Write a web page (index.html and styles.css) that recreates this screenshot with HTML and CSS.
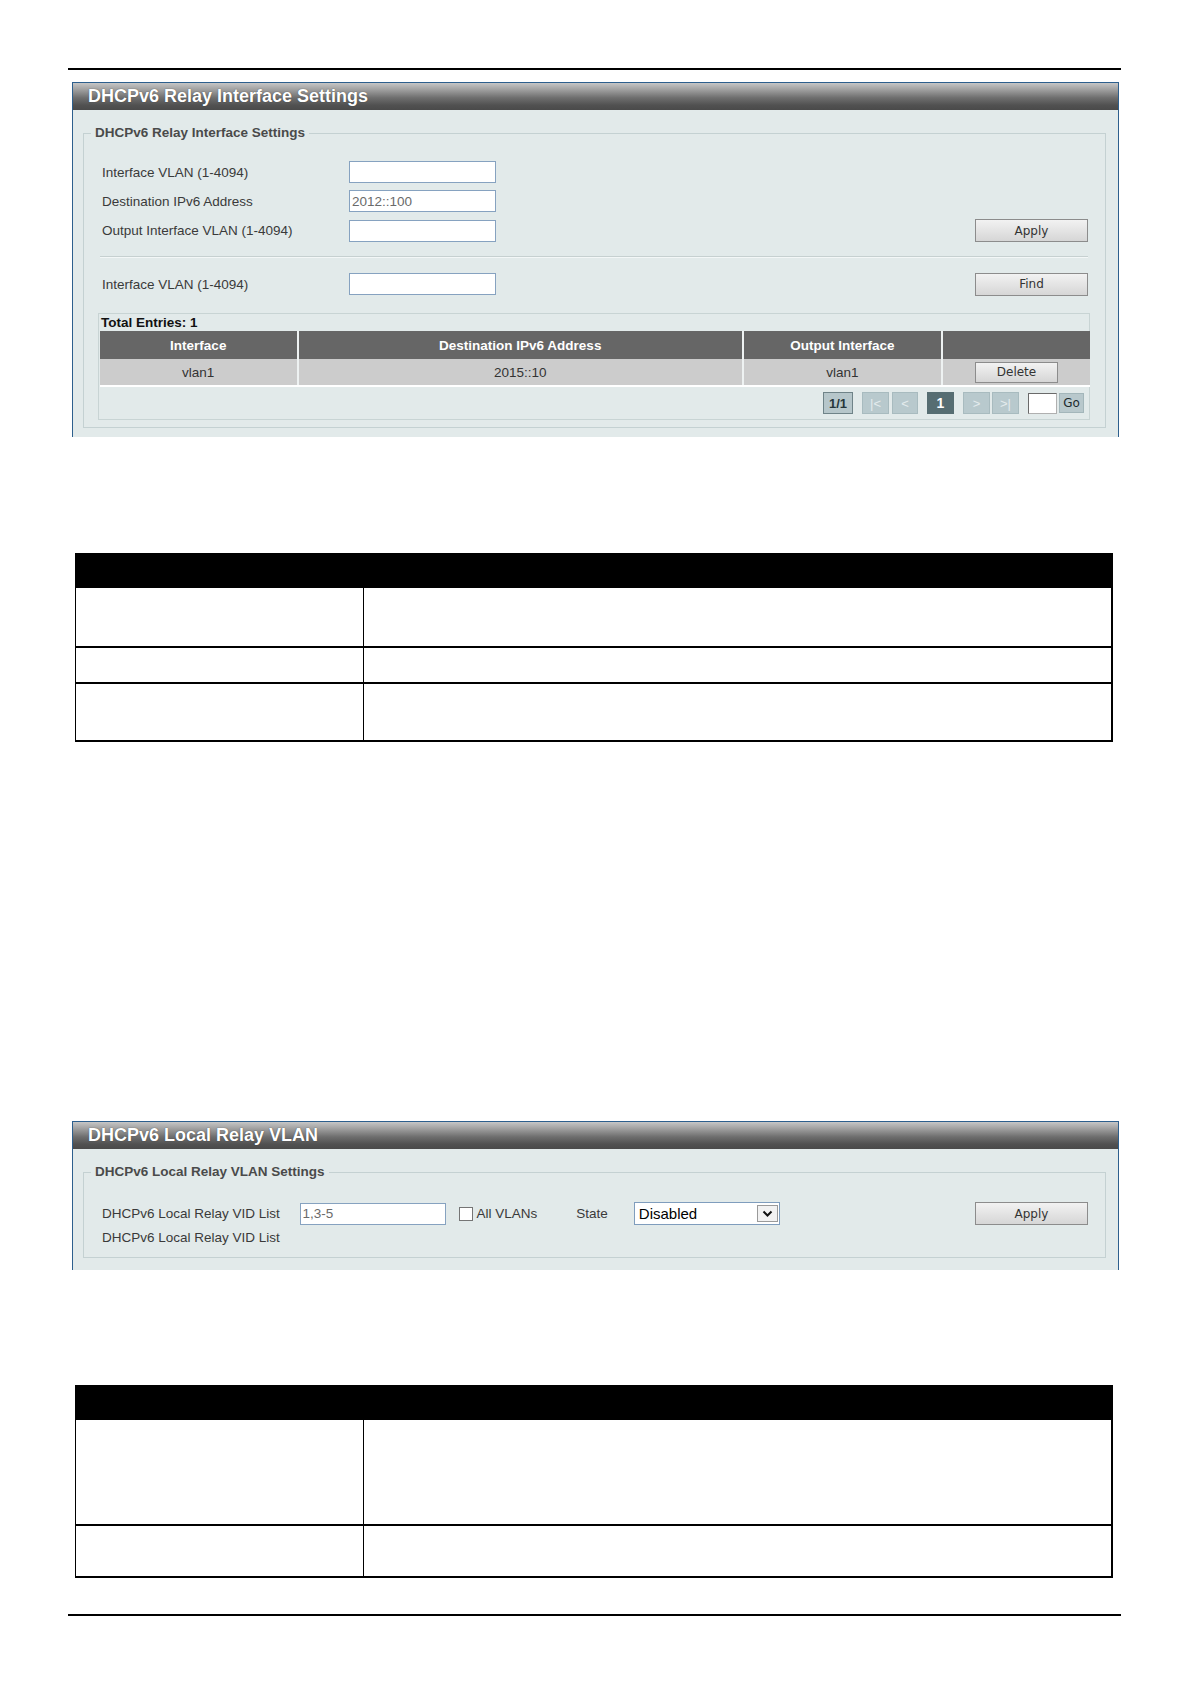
FILE: index.html
```html
<!DOCTYPE html>
<html lang="en">
<head>
<meta charset="utf-8">
<title>DHCPv6 Relay</title>
<link rel="stylesheet" href="styles.css">
</head>
<body>
<div class="sheet">
  <hr class="rule">

  <section class="panel">
    <h2 class="panel-title">DHCPv6 Relay Interface Settings</h2>
    <div class="panel-body">
      <fieldset class="group group-relay">
        <legend>DHCPv6 Relay Interface Settings</legend>
        <div class="form-row">
          <label class="field-label">Interface VLAN (1-4094)</label>
          <input class="text-input" type="text">
        </div>
        <div class="form-row">
          <label class="field-label">Destination IPv6 Address</label>
          <input class="text-input" type="text" value="2012::100">
        </div>
        <div class="form-row form-row-last">
          <label class="field-label">Output Interface VLAN (1-4094)</label>
          <input class="text-input" type="text">
          <button class="btn btn-wide push-right" type="button">Apply</button>
        </div>
        <div class="divider"></div>
        <div class="form-row form-row-find">
          <label class="field-label">Interface VLAN (1-4094)</label>
          <input class="text-input" type="text">
          <button class="btn btn-wide push-right" type="button">Find</button>
        </div>

        <div class="entries">
          <div class="entries-total">Total Entries: 1</div>
          <table class="grid">
            <colgroup>
              <col class="col-if"><col class="col-dst"><col class="col-out"><col class="col-act">
            </colgroup>
            <thead>
              <tr><th>Interface</th><th>Destination IPv6 Address</th><th>Output Interface</th><th></th></tr>
            </thead>
            <tbody>
              <tr>
                <td>vlan1</td><td>2015::10</td><td>vlan1</td>
                <td><button class="btn btn-delete" type="button">Delete</button></td>
              </tr>
            </tbody>
          </table>
          <div class="pager">
            <span class="pg-count">1/1</span>
            <span class="pg-btn pg-first">|&lt;</span>
            <span class="pg-btn pg-prev">&lt;</span>
            <span class="pg-btn pg-current">1</span>
            <span class="pg-btn pg-next">&gt;</span>
            <span class="pg-btn pg-last">&gt;|</span>
            <input class="pg-input" type="text">
            <span class="pg-go">Go</span>
          </div>
        </div>
      </fieldset>
    </div>
  </section>

  <table class="desc desc-relay">
    <thead><tr><th class="desc-param"></th><th></th></tr></thead>
    <tbody>
      <tr class="h59"><td class="desc-param"></td><td></td></tr>
      <tr class="h36"><td class="desc-param"></td><td></td></tr>
      <tr class="h58"><td class="desc-param"></td><td></td></tr>
    </tbody>
  </table>

  <section class="panel panel-local">
    <h2 class="panel-title">DHCPv6 Local Relay VLAN</h2>
    <div class="panel-body panel-body-local">
      <fieldset class="group group-local">
        <legend>DHCPv6 Local Relay VLAN Settings</legend>
        <div class="form-row form-row-local">
          <label class="field-label label-vid">DHCPv6 Local Relay VID List</label>
          <input class="text-input input-vid" type="text" value="1,3-5">
          <input class="check" type="checkbox" id="all-vlans">
          <label class="check-label" for="all-vlans">All VLANs</label>
          <span class="state-label">State</span>
          <span class="select-wrap">
            <select class="select">
              <option>Disabled</option>
              <option>Enabled</option>
            </select>
            <span class="select-arrow">
              <svg width="11" height="8" viewBox="0 0 11 8"><path d="M1.5 1.5 L5.5 5.5 L9.5 1.5" fill="none" stroke="#111" stroke-width="2"/></svg>
            </span>
          </span>
          <button class="btn btn-wide push-right" type="button">Apply</button>
        </div>
        <div class="field-note">DHCPv6 Local Relay VID List</div>
      </fieldset>
    </div>
  </section>

  <table class="desc desc-local">
    <thead><tr><th class="desc-param"></th><th></th></tr></thead>
    <tbody>
      <tr class="h105"><td class="desc-param"></td><td></td></tr>
      <tr class="h52"><td class="desc-param"></td><td></td></tr>
    </tbody>
  </table>

  <hr class="rule rule-bottom">
</div>
</body>
</html>
```

FILE: styles.css
```css
* {
  box-sizing: border-box;
}

body {
  margin: 0;
  background: #ffffff;
  font-family: "Liberation Sans", Arial, sans-serif;
  color: #333333;
}

.sheet {
  width: 1192px;
  padding: 68px 0 60px 68px;
}

/* page rules */
.rule {
  width: 1053px;
  height: 2px;
  margin: 0;
  border: 0;
  background: #000000;
}

.rule-bottom {
  margin-top: 36px;
}

/* settings panel */
.panel {
  width: 1047px;
  margin: 12px 0 0 4px;
  border: 1px solid #2d5f8d;
  border-bottom: 0;
  background: #e2eaea;
}

.panel-local {
  margin-top: 379px;
}

.panel-title {
  margin: 0;
  height: 27px;
  padding-left: 15px;
  line-height: 27px;
  font-size: 18px;
  font-weight: bold;
  color: #ffffff;
  text-shadow: 0 0 1px #333333;
  background: linear-gradient(to bottom, #c6c6c6 0%, #a4a4a4 22%, #6e6e6e 55%, #515151 82%, #4a4a4a 100%);
}

.panel-body {
  padding: 15px 12px 9px 10px;
}

.panel-body-local {
  padding-bottom: 12px;
}

.group {
  margin: 0;
  min-width: 0;
  border: 1px solid #c4d1d2;
  padding: 20px 15px 7px 14px;
}

.group-local {
  padding-top: 22px;
  padding-bottom: 11px;
}

.group legend {
  margin-left: -7px;
  padding: 0 4px;
  line-height: 16px;
  font-size: 13.5px;
  font-weight: bold;
  color: #4a4a4a;
}

/* form rows */
.form-row {
  display: flex;
  align-items: center;
  height: 22px;
  margin-bottom: 7px;
  padding: 0 2px 0 4px;
}

.form-row-last {
  height: 23px;
  margin-bottom: 0;
}

.form-row-find {
  margin-top: 15px;
  margin-bottom: 0;
}

.form-row-local {
  height: 23px;
  margin-bottom: 0;
}

.field-label {
  flex: 0 0 247px;
  font-size: 13.5px;
  color: #3a3a3a;
}

.label-vid {
  flex-basis: 197.5px;
}

.text-input {
  width: 147px;
  height: 22px;
  margin: 0;
  padding: 0 2px;
  border: 1px solid #86a2c0;
  background: #ffffff;
  font-family: "Liberation Sans", Arial, sans-serif;
  font-size: 13.5px;
  color: #6a6a6a;
  outline: none;
}

.input-vid {
  width: 146px;
}

.btn {
  margin: 0;
  padding: 0;
  border: 1px solid #8c8c8c;
  background: linear-gradient(to bottom, #f2f2f2 0%, #e4e4e4 50%, #d6d6d6 100%);
  font-family: "DejaVu Sans", sans-serif;
  font-size: 12px;
  color: #333333;
}

.form-row .push-right {
  margin-left: auto;
}

.btn-wide {
  width: 113px;
  height: 23px;
}

.btn-delete {
  width: 83px;
  height: 21px;
  vertical-align: middle;
}

.divider {
  margin: 14px 2px 0;
  height: 2px;
  border-top: 1px solid #c6d0d0;
  border-bottom: 1px solid #f3f7f7;
}

/* entries table */
.entries {
  margin-top: 18px;
  border: 1px solid #c8d4d4;
  padding-left: 1px;
}

.entries-total {
  height: 17px;
  line-height: 17px;
  padding-left: 1px;
  font-size: 13.5px;
  font-weight: bold;
  color: #111111;
}

.grid {
  width: 100%;
  border-collapse: collapse;
  table-layout: fixed;
  font-size: 13.5px;
}

.col-if { width: 197.5px; }
.col-dst { width: 445.5px; }
.col-out { width: 199px; }
.col-act { width: 148px; }

.grid th {
  height: 28px;
  padding: 0;
  background: #666666;
  color: #ffffff;
  font-weight: bold;
  text-align: center;
  border-left: 2px solid #eef2f2;
}

.grid td {
  height: 27px;
  padding: 0;
  background: #cccccc;
  color: #333333;
  text-align: center;
  border-left: 2px solid #eef2f2;
  border-bottom: 2px solid #ffffff;
}

.grid th:first-child,
.grid td:first-child {
  border-left: 0;
}

.pager {
  display: flex;
  align-items: center;
  justify-content: flex-end;
  height: 32px;
  padding-right: 5px;
  font-size: 13px;
  font-weight: bold;
}

.pg-count,
.pg-btn,
.pg-go {
  display: flex;
  align-items: center;
  justify-content: center;
  height: 22px;
}

.pg-count {
  width: 30px;
  margin-right: 9px;
  border: 1px solid #6f8388;
  background: #b6c6ca;
  color: #26363b;
}

.pg-btn {
  width: 27px;
  border: 1px solid #a8bbbf;
  background: #b8c9cd;
  color: #e4ecee;
  font-weight: normal;
}

.pg-first {
  margin-right: 3px;
}

.pg-prev {
  width: 26px;
  margin-right: 9px;
}

.pg-current {
  margin-right: 9px;
  border-color: #566d72;
  background: #566d72;
  color: #ffffff;
  font-size: 14px;
  font-weight: bold;
}

.pg-next {
  margin-right: 2px;
}

.pg-last {
  margin-right: 9px;
}

.pg-input {
  width: 29px;
  height: 21px;
  margin: 0 2px 0 0;
  padding: 0;
  border: 1px solid #b0b0b0;
  border-top-color: #6a6a6a;
  border-left-color: #6a6a6a;
  background: #ffffff;
  outline: none;
}

.pg-go {
  width: 25px;
  height: 20px;
  border: 1px solid #a3b6ba;
  background: #b8c8cc;
  color: #1c2a2e;
  font-family: "DejaVu Sans", sans-serif;
  font-size: 12px;
  font-weight: normal;
}

/* local relay row */
.check {
  appearance: none;
  -webkit-appearance: none;
  width: 14px;
  height: 14px;
  margin: 0 0 0 13px;
  border: 1px solid #757575;
  background: #ffffff;
}

.check-label {
  margin-left: 4px;
  font-size: 13.5px;
  color: #3a3a3a;
}

.state-label {
  margin-left: 39px;
  font-size: 13.5px;
  color: #3a3a3a;
}

.select-wrap {
  position: relative;
  display: block;
  width: 146px;
  height: 23px;
  margin-left: 26px;
}

.select {
  appearance: none;
  -webkit-appearance: none;
  width: 100%;
  height: 100%;
  margin: 0;
  padding: 0 0 0 4px;
  border: 1px solid #7f9dbd;
  background: #ffffff;
  font-family: "Liberation Sans", Arial, sans-serif;
  font-size: 15px;
  color: #000000;
  outline: none;
}

.select-arrow {
  position: absolute;
  top: 3px;
  right: 2px;
  width: 21px;
  height: 17px;
  display: flex;
  align-items: center;
  justify-content: center;
  border: 1px solid #9a9a9a;
  background: #f2f2f2;
  pointer-events: none;
}

.field-note {
  margin-top: 5px;
  padding-left: 4px;
  line-height: 16px;
  font-size: 13.5px;
  color: #3a3a3a;
}

/* description tables */
.desc {
  width: 1038px;
  margin: 116px 0 0 7px;
  border-collapse: collapse;
  border-left: 1px solid #000000;
  border-right: 2px solid #000000;
}

.desc-local {
  margin-top: 115px;
}

.desc th {
  height: 35px;
  padding: 0;
  background: #000000;
}

.desc td {
  padding: 0;
  border-bottom: 2px solid #000000;
}

.desc .desc-param {
  width: 288px;
}

.desc td.desc-param {
  border-right: 1px solid #000000;
}

.h59 td { height: 59px; }
.h36 td { height: 36px; }
.h58 td { height: 58px; }
.h105 td { height: 105px; }
.h52 td { height: 52px; }
```
